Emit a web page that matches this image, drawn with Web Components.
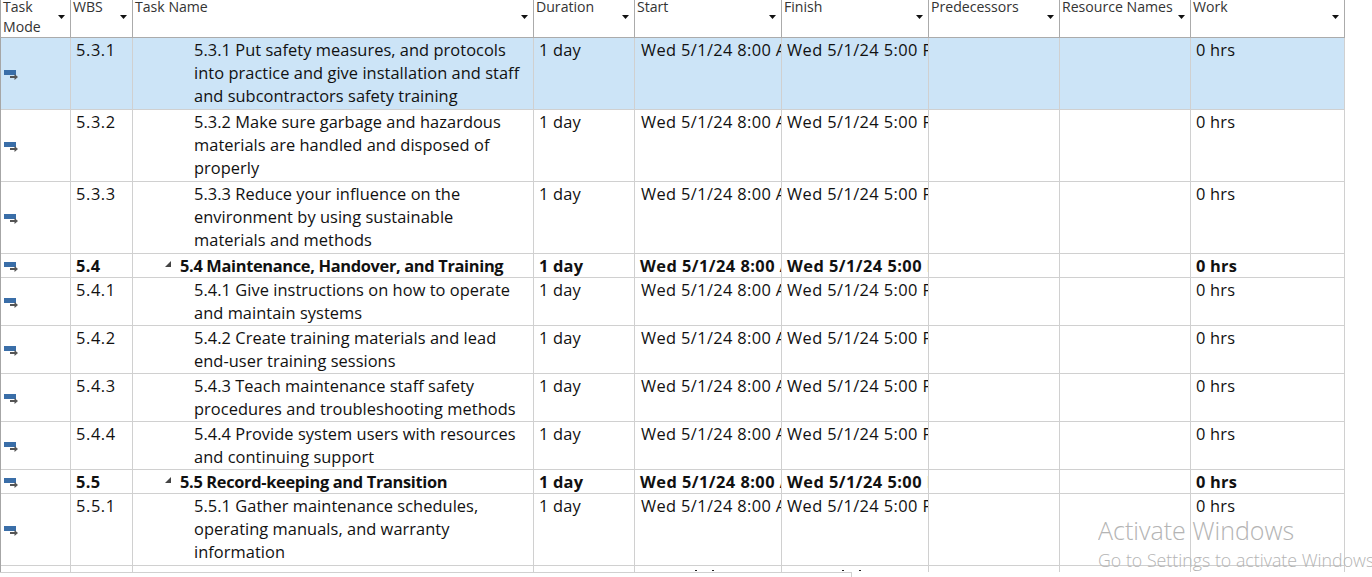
<!DOCTYPE html>
<html lang="en"><head><meta charset="utf-8"><title>Task sheet</title>
<style>
html,body{margin:0;padding:0;background:#fff;width:1372px;height:577px;overflow:hidden}
body{font-family:"Open Sans","Liberation Sans",sans-serif;color:#111}
</style></head><body>
<task-sheet>
  <sheet-header>
    <head-cell>Task<br>Mode</head-cell><head-cell>WBS</head-cell><head-cell>Task Name</head-cell><head-cell>Duration</head-cell><head-cell>Start</head-cell><head-cell>Finish</head-cell><head-cell>Predecessors</head-cell><head-cell>Resource Names</head-cell><head-cell>Work</head-cell>
  </sheet-header>
  <task-row h="72" wbs="5.3.1" selected>5.3.1 Put safety measures, and protocols<br>into practice and give installation and staff<br>and subcontractors safety training</task-row>
  <task-row h="72" wbs="5.3.2">5.3.2 Make sure garbage and hazardous<br>materials are handled and disposed of<br>properly</task-row>
  <task-row h="72" wbs="5.3.3">5.3.3 Reduce your influence on the<br>environment by using sustainable<br>materials and methods</task-row>
  <task-row h="24" wbs="5.4" summary>5.4 Maintenance, Handover, and Training</task-row>
  <task-row h="48" wbs="5.4.1">5.4.1 Give instructions on how to operate<br>and maintain systems</task-row>
  <task-row h="48" wbs="5.4.2">5.4.2 Create training materials and lead<br>end-user training sessions</task-row>
  <task-row h="48" wbs="5.4.3">5.4.3 Teach maintenance staff safety<br>procedures and troubleshooting methods</task-row>
  <task-row h="48" wbs="5.4.4">5.4.4 Provide system users with resources<br>and continuing support</task-row>
  <task-row h="24" wbs="5.5" summary>5.5 Record-keeping and Transition</task-row>
  <task-row h="72" wbs="5.5.1">5.5.1 Gather maintenance schedules,<br>operating manuals, and warranty<br>information</task-row>
  <task-row h="6" clipped></task-row>
</task-sheet>
<sheet-foot></sheet-foot>
<win-watermark></win-watermark>
<script>
const COLS='70px 62px 401px 101px 147px 147px 131px 131px 154px';
customElements.define('task-sheet',class extends HTMLElement{constructor(){super();this.attachShadow({mode:'open'}).innerHTML=`<style>:host{display:block;width:1345px;height:572px;overflow:hidden;box-sizing:border-box;border-left:1px solid #a6a6a6}</style><slot></slot>`}});
customElements.define('sheet-header',class extends HTMLElement{constructor(){super();this.attachShadow({mode:'open'}).innerHTML=`<style>:host{display:grid;grid-template-columns:${COLS};height:38px;box-sizing:border-box;border-bottom:1px solid #ababab}</style><slot></slot>`}});
customElements.define('head-cell',class extends HTMLElement{constructor(){super();this.attachShadow({mode:'open'}).innerHTML=`<style>
:host{display:block;position:relative;box-sizing:border-box;border-right:1px solid #ababab;padding-left:2px;overflow:hidden;font-size:14.1px;line-height:20px;color:#333}
.t{margin-top:-3px}
svg{position:absolute;right:5px;top:15px}
</style><div class="t"><slot></slot></div><svg width="7" height="4" viewBox="0 0 7 4"><path d="M0 0H7L3.5 4Z" fill="#111"/></svg>`}});
customElements.define('mode-icon',class extends HTMLElement{constructor(){super();this.attachShadow({mode:'open'}).innerHTML=`<style>:host{display:block;width:15px;height:10px}svg{display:block}</style><svg width="15" height="10" viewBox="0 0 15 10"><rect x="0" y="0" width="12" height="5" fill="#3a6ea8"/><path d="M6 7H11" stroke="#555" stroke-width="2" fill="none"/><path d="M10.5 4L14 7L10.5 10Z" fill="#555"/></svg>`}});
customElements.define('task-row',class extends HTMLElement{constructor(){super();
const a=n=>this.getAttribute(n);const clipped=this.hasAttribute('clipped');const sum=this.hasAttribute('summary');
const c=(v,cls='')=>`<div class="c ${cls}"><span class="v">${v}</span></div>`;
const dots=clipped?'<i class="m" style="left:60px"></i><i class="m" style="left:77px"></i>':'';
this.attachShadow({mode:'open'}).innerHTML=`<style>
:host{display:grid;grid-template-columns:${COLS};height:${a('h')}px;font-size:16.4px;line-height:23px;color:#111;background:${this.hasAttribute('selected')?'#cce4f7':'#fff'}}
:host([summary]){font-weight:700}
:host([clipped]) .c{border-bottom:0}
.c{box-sizing:border-box;border-right:1px solid #d0d0d0;border-bottom:1px solid #d0d0d0;padding-left:5px;overflow:hidden;white-space:nowrap;min-width:0;position:relative}
.i{padding:3px 0 0 3px;display:flex;align-items:center}
.w{letter-spacing:.6px}
:host([summary]) .w{letter-spacing:.4px}
.n{padding-left:61px;letter-spacing:.05px}
.s{padding-left:47px;letter-spacing:-.33px}
.d{letter-spacing:.2px}
.dt{letter-spacing:.4px}
.st{padding-left:6px;letter-spacing:.36px}
:host([summary]) .st{padding-left:5px}
:host([summary]) .dt{letter-spacing:.45px}
.tri{position:absolute;left:32px;top:7px}
.m{position:absolute;top:4px;width:2px;height:1px;background:#222}
</style>
<div class="c i">${clipped?'':'<mode-icon></mode-icon>'}</div>
${c(clipped?'':a('wbs'),'w')}
<div class="c n ${sum?'s':''}">${sum?'<svg class="tri" width="6" height="6" viewBox="0 0 6 6"><path d="M6 0V6H0Z" fill="#444"/></svg>':''}<slot></slot></div>
${c(clipped?'':'1 day','d')}
<div class="c dt st">${clipped?dots:'<span class="v">Wed 5/1/24 8:00 AM</span>'}</div>
<div class="c dt">${clipped?dots:'<span class="v">Wed 5/1/24 5:00 PM</span>'}</div>
${c('')}${c('')}
${c(clipped?'':'0 hrs','d')}`}});
customElements.define('sheet-foot',class extends HTMLElement{constructor(){super();this.attachShadow({mode:'open'}).innerHTML=`<style>:host{display:block;width:851px;height:5px;box-sizing:content-box;border-top:1px solid #d0d0d0;border-right:1px solid #d0d0d0}</style>`}});
customElements.define('win-watermark',class extends HTMLElement{constructor(){super();this.attachShadow({mode:'open'}).innerHTML=`<style>
:host{position:absolute;left:1098px;top:517px;width:274px;overflow:hidden;white-space:nowrap;font-family:"Open Sans","Noto Sans",sans-serif;font-weight:300;color:#b4b4b4}
.a{font-size:25px;line-height:26px}.b{font-size:17.8px;line-height:28px;height:28px;margin-top:3px}
</style><div class="a">Activate Windows</div><div class="b">Go to Settings to activate Windows.</div>`}});
</script>
</body></html>
